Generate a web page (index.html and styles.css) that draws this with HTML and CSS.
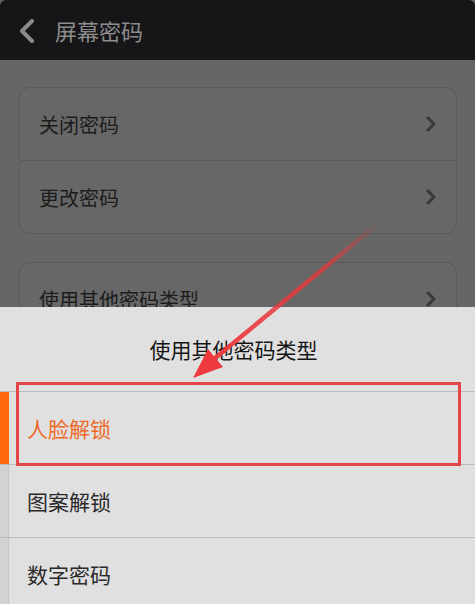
FILE: index.html
```html
<!DOCTYPE html>
<html lang="zh">
<head>
<meta charset="utf-8">
<title>屏幕密码</title>
<link rel="stylesheet" href="styles.css">
</head>
<body>
<div class="screen">
  <header class="header">
    <svg class="back" width="18" height="24" viewBox="0 0 18 24"><path d="M14 2 L4 12 L14 22" fill="none" stroke="#8a8a8a" stroke-width="4" stroke-linecap="round" stroke-linejoin="round"/></svg>
    <span class="header-title">屏幕密码</span>
  </header>
  <main class="content">
    <section class="card">
      <div class="card-row"><span>关闭密码</span><svg class="chev" width="14" height="18" viewBox="0 0 14 18"><path d="M3 2 L10 9 L3 16" fill="none" stroke="#3a3a3a" stroke-width="3" stroke-linejoin="round"/></svg></div>
      <div class="card-row"><span>更改密码</span><svg class="chev" width="14" height="18" viewBox="0 0 14 18"><path d="M3 2 L10 9 L3 16" fill="none" stroke="#3a3a3a" stroke-width="3" stroke-linejoin="round"/></svg></div>
    </section>
    <section class="card">
      <div class="card-row"><span>使用其他密码类型</span><svg class="chev" width="14" height="18" viewBox="0 0 14 18"><path d="M3 2 L10 9 L3 16" fill="none" stroke="#3a3a3a" stroke-width="3" stroke-linejoin="round"/></svg></div>
    </section>
  </main>
  <div class="sheet">
    <div class="sheet-title">使用其他密码类型</div>
    <div class="sheet-row active"><span class="mark"></span><span class="label">人脸解锁</span></div>
    <div class="sheet-row"><span class="mark"></span><span class="label">图案解锁</span></div>
    <div class="sheet-row"><span class="mark"></span><span class="label">数字密码</span></div>
  </div>
  <div class="highlight"></div>
  <svg class="arrow" width="475" height="604" viewBox="0 0 475 604">
    <defs>
      <linearGradient id="shaft" x1="380" y1="222" x2="200" y2="370" gradientUnits="userSpaceOnUse">
        <stop offset="0" stop-color="#e8383c" stop-opacity="0"/>
        <stop offset="0.3" stop-color="#e8383c" stop-opacity="0.75"/>
        <stop offset="1" stop-color="#ee3a3e" stop-opacity="1"/>
      </linearGradient>
    </defs>
    <path d="M380 222 L214 359" stroke="url(#shaft)" stroke-width="4.5" stroke-linecap="round" fill="none"/>
    <polygon points="193,378 208,349 223,367" fill="#ee3a3e"/>
  </svg>
</div>
</body>
</html>
```
FILE: styles.css
```css
html, body {
  margin: 0;
  padding: 0;
}
body {
  font-family: "Noto Sans CJK SC", "Noto Sans", sans-serif;
  background: #666666;
}
.screen {
  position: relative;
  width: 475px;
  height: 604px;
  overflow: hidden;
  background: #666666;
}
.header {
  height: 60px;
  background: #161618;
  display: flex;
  align-items: center;
  padding-left: 18px;
  gap: 19px;
  border-radius: 6px 6px 0 0;
}
.back {
  display: block;
  margin-top: 1px;
}
.header-title {
  font-size: 22px;
  color: #8c8c8c;
  line-height: 1;
}
.content {
  padding: 27px 18px 0 19px;
  display: flex;
  flex-direction: column;
  gap: 28px;
}
.card {
  border: 1px solid #5a5a5a;
  border-radius: 11px;
  background: #676767;
}
.card-row {
  height: 72px;
  display: flex;
  align-items: center;
  justify-content: space-between;
  padding: 0 18px 0 19px;
  font-size: 20px;
  color: #1c1c1c;
}
.card-row + .card-row {
  border-top: 1px solid #5b5b5b;
}
.chev {
  display: block;
}
.sheet {
  position: absolute;
  left: 0;
  right: 0;
  top: 307px;
  bottom: 0;
  background: #e0e0e0;
}
.sheet-title {
  height: 84px;
  display: flex;
  align-items: center;
  justify-content: center;
  padding-right: 8px;
  font-size: 21px;
  color: #151515;
}
.sheet-row {
  height: 72px;
  display: flex;
  align-items: stretch;
  border-top: 1px solid #bcbcbc;
}
.mark {
  width: 8px;
  background: #d2d2d2;
  border-right: 1px solid #c6c6c6;
}
.active .mark {
  background: #ff6a10;
  border-right-color: #ff6a10;
}
.label {
  display: flex;
  align-items: center;
  padding-left: 18px;
  font-size: 21px;
  color: #2a2a2a;
}
.active .label {
  color: #ee6a26;
}
.highlight {
  position: absolute;
  left: 16px;
  top: 382px;
  width: 439px;
  height: 78px;
  border: 3px solid #e5434a;
}
.arrow {
  position: absolute;
  left: 0;
  top: 0;
}
```
